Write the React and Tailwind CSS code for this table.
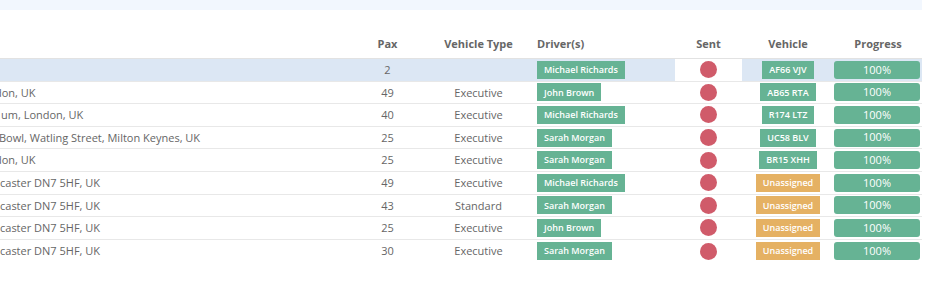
import React from "react";

const rows = [
  { addr: "", ml: "", pax: "2", type: "", driver: "Michael Richards", vehicle: "AF66 VJV", assigned: true, hl: true },
  { addr: "don, UK", ml: "-ml-[5px]", pax: "49", type: "Executive", driver: "John Brown", vehicle: "AB65 RTA", assigned: true },
  { addr: "um, London, UK", ml: "ml-[1px]", pax: "40", type: "Executive", driver: "Michael Richards", vehicle: "R174 LTZ", assigned: true },
  { addr: "Bowl, Watling Street, Milton Keynes, UK", ml: "-ml-[1px]", pax: "25", type: "Executive", driver: "Sarah Morgan", vehicle: "UC58 BLV", assigned: true },
  { addr: "don, UK", ml: "-ml-[5px]", pax: "25", type: "Executive", driver: "Sarah Morgan", vehicle: "BR15 XHH", assigned: true },
  { addr: "caster DN7 5HF, UK", ml: "ml-0", pax: "49", type: "Executive", driver: "Michael Richards", vehicle: "Unassigned", assigned: false },
  { addr: "caster DN7 5HF, UK", ml: "ml-0", pax: "43", type: "Standard", driver: "Sarah Morgan", vehicle: "Unassigned", assigned: false },
  { addr: "caster DN7 5HF, UK", ml: "ml-0", pax: "25", type: "Executive", driver: "John Brown", vehicle: "Unassigned", assigned: false },
  { addr: "caster DN7 5HF, UK", ml: "ml-0", pax: "30", type: "Executive", driver: "Sarah Morgan", vehicle: "Unassigned", assigned: false, last: true },
];

const cols = "grid grid-cols-[355px_65px_117px_138px_67px_92px_88px] w-[922px]";

export default function App() {
  return (
    <div className="w-[932px] h-[285px] bg-white font-['Open_Sans',sans-serif] text-[11px] text-[#666] overflow-hidden">
      <div className="w-[922px] h-[10px] bg-[#f2f7fe]" />
      <div className="h-[20px]" />
      <div className={`${cols} h-[29px] border-b border-[#e2e2e2] items-center font-bold text-[#666]`}>
        <div />
        <div className="text-center">Pax</div>
        <div className="text-center">Vehicle Type</div>
        <div>Driver(s)</div>
        <div className="text-center">Sent</div>
        <div className="text-center">Vehicle</div>
        <div className="text-center">Progress</div>
      </div>
      {rows.map((r, i) => (
        <div
          key={i}
          className={`${cols} h-[22.6px] items-stretch ${r.last ? "" : "border-b border-[#e8e8e8]"} ${r.hl ? "bg-[#dce7f4]" : ""}`}
        >
          <div className="overflow-hidden whitespace-nowrap flex items-center pt-px">
            <span className={r.ml}>{r.addr}</span>
          </div>
          <div className="flex items-center justify-center pt-px">{r.pax}</div>
          <div className="flex items-center justify-center pt-px">{r.type}</div>
          <div className="flex items-center">
            <span className="h-[18px] px-[7px] flex items-center bg-[#66b394] text-white text-[9px] font-semibold whitespace-nowrap">
              {r.driver}
            </span>
          </div>
          <div className={`flex items-center justify-center ${r.hl ? "bg-white" : ""}`}>
            <span className="w-[17px] h-[17px] rounded-full bg-[#d05b6a]" />
          </div>
          <div className="flex items-center justify-center">
            <span
              className={`h-[18px] px-[7px] flex items-center text-white text-[9px] font-semibold whitespace-nowrap ${
                r.assigned ? "bg-[#66b394]" : "bg-[#e5b163]"
              }`}
            >
              {r.vehicle}
            </span>
          </div>
          <div className="flex items-center">
            <span className="w-[86px] h-[18px] rounded-[3px] bg-[#66b394] text-white text-[11px] flex items-center justify-center">
              100%
            </span>
          </div>
        </div>
      ))}
    </div>
  );
}
